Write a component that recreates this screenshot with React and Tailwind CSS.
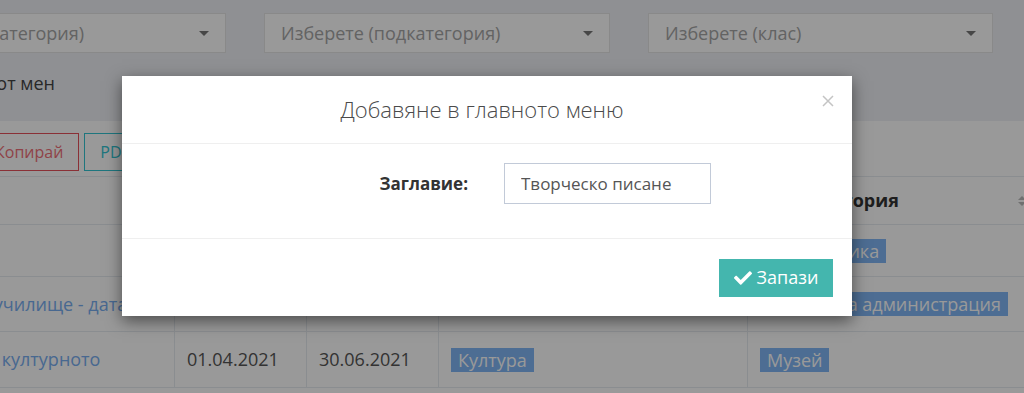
import React from "react";
import { FaCheck } from "react-icons/fa";

const Select = ({ placeholder, className = "" }) => (
  <div
    className={`flex h-[40px] items-center justify-between border border-[#e5e5e5] bg-white pl-[16px] pr-[16px] text-[18px] text-[#a5a5a5] ${className}`}
  >
    <span className="whitespace-nowrap">{placeholder}</span>
    <span className="h-0 w-0 border-x-[5px] border-t-[5px] border-x-transparent border-t-[#777]" />
  </div>
);

const Label = ({ children }) => (
  <span className="inline-block whitespace-nowrap bg-[#80b6f5] px-[7px] leading-[24px] text-white">
    {children}
  </span>
);

// columns of the list table behind the modal
const cols = "grid grid-cols-[375px_132px_132px_309px_290px]";

const rows = [
  { h: "h-[52px]", cells: ["Проект", "", "", "Образование", "Електроника"] },
  { h: "h-[55px]", cells: ["Отворените врати в училище - дата", "", "", "Администрация", "Държавна администрация"] },
  { h: "h-[56px]", cells: ["Час за запознаване с културното", "01.04.2021", "30.06.2021", "Култура", "Музей"] },
];

const Cell = ({ children, idx, last }) => (
  <div
    className={`flex items-center overflow-hidden whitespace-nowrap px-[12px] ${
      last ? "" : "border-r border-[#e7ecf1]"
    } ${idx === 0 ? "text-[#78aef0]" : "text-[#555]"}`}
  >
    {children}
  </div>
);

export default function App() {
  return (
    <div className="relative h-[393px] w-[1024px] overflow-hidden bg-[#eef0f5] font-['Open_Sans',sans-serif] text-[18px]">
      {/* FILTERS */}
      <div className="ml-[-120px] flex gap-[38px] pt-[13px]">
        <Select placeholder="Изберете (категория)" className="w-[346px]" />
        <Select placeholder="Изберете (подкатегория)" className="w-[346px]" />
        <Select placeholder="Изберете (клас)" className="w-[345px]" />
      </div>
      <div className="flex h-[68px] items-center pb-[8px]">
        <div className="ml-[-120px] w-[175px] whitespace-nowrap text-right text-[#444]">
          Само от мен
        </div>
      </div>

      {/* LIST */}
      <div className="h-full bg-white">
        <div className="flex h-[55px] items-start gap-[5px] pt-[12px] text-[16px]">
          <div className="ml-[-21px] flex h-[38px] items-center border border-[#e7505a] px-[15px] text-[#ef6f78]">
            Копирай
          </div>
          <div className="flex h-[38px] items-center border border-[#32c5d2] px-[15px] text-[#32c5d2]">
            PDF
          </div>
        </div>
        <div className="ml-[-200px] border-t border-[#e7ecf1]">
          <div className={`${cols} h-[48px] border-b border-[#e7ecf1] font-bold text-[#333]`}>
            <div className="flex items-center border-r border-[#e7ecf1] px-[12px]">Заглавие</div>
            <div className="flex items-center border-r border-[#e7ecf1] px-[12px]">От</div>
            <div className="flex items-center border-r border-[#e7ecf1] px-[12px]">До</div>
            <div className="flex items-center border-r border-[#e7ecf1] px-[12px]">Категория</div>
            <div className="flex items-center justify-between pl-[17px] pr-[12px]">
              <span>Подкатегория</span>
              <span className="flex flex-col gap-[2px]">
                <span className="h-0 w-0 border-x-[4px] border-b-[4px] border-x-transparent border-b-[#bbb]" />
                <span className="h-0 w-0 border-x-[4px] border-t-[4px] border-x-transparent border-t-[#bbb]" />
              </span>
            </div>
          </div>
          {rows.map((row) => (
            <div key={row.cells[0]} className={`${cols} ${row.h} border-b border-[#e7ecf1]`}>
              {row.cells.map((c, i) => (
                <Cell key={i} idx={i} last={i === 4}>
                  {i >= 3 ? <Label>{c}</Label> : c}
                </Cell>
              ))}
            </div>
          ))}
        </div>
      </div>

      {/* BACKDROP */}
      <div className="absolute inset-0 bg-black/40" />

      {/* MODAL */}
      <div className="absolute left-[122px] top-[76px] w-[730px] bg-white shadow-[0_5px_15px_rgba(0,0,0,0.5)]">
        <div className="relative flex h-[68px] items-center justify-center border-b border-[#efefef] pr-[10px]">
          <h4 className="text-[22px] font-light text-[#4a4a4a]">Добавяне в главното меню</h4>
          <svg
            className="absolute right-[18px] top-[19px]"
            width="12"
            height="12"
            viewBox="0 0 12 12"
            stroke="#c4c4c4"
            strokeWidth="1.5"
          >
            <path d="M1 1l10 10M11 1l-10 10" />
          </svg>
        </div>
        <div className="flex h-[94px] items-start pt-[19px]">
          <label className="w-[346px] pt-[8px] text-right text-[17px] font-bold text-[#333]">
            Заглавие:
          </label>
          <input
            readOnly
            value="Творческо писане"
            className="ml-[36px] h-[41px] w-[207px] border border-[#c2cad8] px-[16px] text-[17px] text-[#555] outline-none"
          />
        </div>
        <div className="flex h-[78px] items-center justify-end border-t border-[#efefef] pr-[19px]">
          <button className="flex h-[38px] w-[114px] items-center justify-center gap-[5px] bg-[#44b6ae] text-[18px] text-white">
            <FaCheck className="h-[18px] w-[18px]" />
            Запази
          </button>
        </div>
      </div>
    </div>
  );
}
